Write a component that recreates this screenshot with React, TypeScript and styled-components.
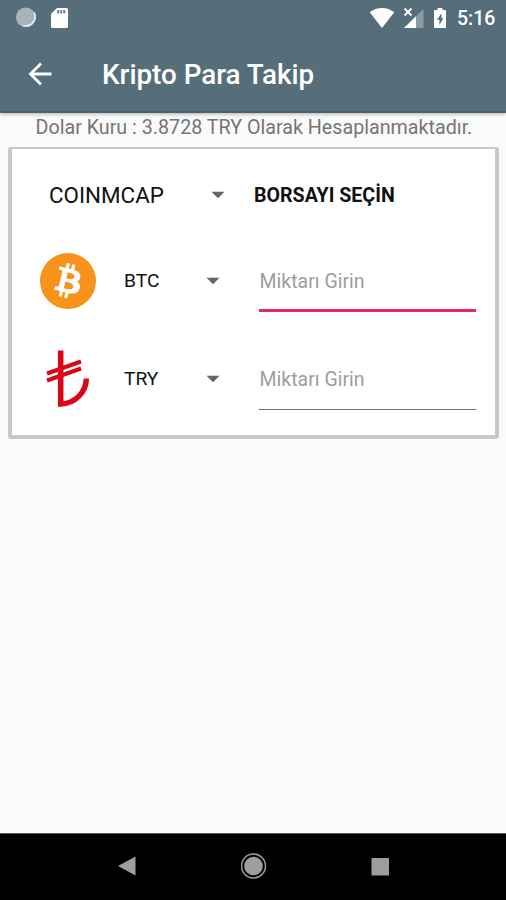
import React from 'react';
import styled, { createGlobalStyle } from 'styled-components';

const GlobalStyle = createGlobalStyle`
  * { box-sizing: border-box; }
  body { margin: 0; background: #fafafa; font-family: Roboto, sans-serif; }
`;

const Screen = styled.div`
  width: 506px;
  height: 900px;
  display: flex;
  flex-direction: column;
  background: #fafafa;
  overflow: hidden;
`;

const Header = styled.header`
  height: 113px;
  flex: none;
  background: #566e7a;
  border-bottom: 2px solid #456470;
  box-shadow: 0 1px 4px rgba(0, 0, 0, 0.3);
  color: #fff;
`;

const StatusBar = styled.div`
  height: 35px;
  display: flex;
  align-items: center;
  justify-content: space-between;
  padding: 0 11px 0 15px;
`;

const StatusGroup = styled.div<{ $gap: number }>`
  display: flex;
  align-items: center;
  gap: ${(p) => p.$gap}px;
`;

const Clock = styled.span`
  font-size: 19.5px;
  font-weight: 500;
  line-height: 22px;
  padding-top: 2px;
  width: 38px;
  margin-left: 2px;
  white-space: nowrap;
`;

const Toolbar = styled.div`
  height: 77px;
  display: flex;
  align-items: center;
  padding-left: 28px;
`;

const BackButton = styled.button`
  display: flex;
  padding: 0;
  border: 0;
  background: none;
  color: inherit;
`;

const Title = styled.h1`
  margin: 2px 0 0 50px;
  font-size: 27.8px;
  font-weight: 500;
  line-height: 36px;
  white-space: nowrap;
`;

const Main = styled.main`
  flex: 1;
  display: flex;
  flex-direction: column;
`;

const Rate = styled.p`
  height: 34px;
  margin: 0;
  padding-left: 35.5px;
  font-size: 19.7px;
  line-height: 30px;
  color: #757575;
  white-space: nowrap;
`;

const Card = styled.section`
  width: 491px;
  height: 292px;
  margin-left: 8px;
  background: #fff;
  border: solid #c8c8c8;
  border-width: 2px 4px 4px;
  border-radius: 3px;
  padding-top: 2px;
`;

const MarketRow = styled.div`
  height: 88px;
  display: grid;
  grid-template-columns: 205px 1fr;
  align-items: center;
  padding-left: 37px;
`;

const CurrencyRow = styled.div<{ $height: number }>`
  height: ${(p) => p.$height}px;
  display: grid;
  grid-template-columns: 56px 28px 135px 217px;
  align-items: center;
  padding-left: 28px;
`;

const Spinner = styled.div<{ $size: number; $arrow: number }>`
  display: grid;
  grid-template-columns: ${(p) => p.$arrow}px 14px;
  align-items: center;
  font-size: ${(p) => p.$size}px;
  line-height: 28px;
  color: #111;
`;

const Prompt = styled.strong`
  font-size: 19.6px;
  font-weight: 700;
  color: #111;
  white-space: nowrap;
`;

const Amount = styled.input<{ $focused?: boolean }>`
  width: 217px;
  height: 62px;
  padding: ${(p) => (p.$focused ? 3 : 2)}px 0 ${(p) => (p.$focused ? 0 : 1)}px 0.5px;
  border: 0;
  border-bottom: ${(p) => (p.$focused ? '3px solid #ec2566' : '1px solid #707070')};
  background: transparent;
  font: 400 19.5px Roboto, sans-serif;
  outline: 0;
  &::placeholder { color: #9d9d9d; opacity: 1; }
`;

const NavBar = styled.nav`
  height: 67px;
  flex: none;
  display: flex;
  align-items: center;
  justify-content: space-between;
  padding: 0 116px 2px 117px;
  background: #000;
  border-top: 1px solid #555;
`;

const Caret = () => (
  <svg width="14" height="8" viewBox="0 0 14 8"><path d="M0.5 .8h13L7 7.3z" fill="#666" /></svg>
);

const Bitcoin = () => (
  <svg width="56" height="57" viewBox="0 0 64 65">
    <circle cx="32" cy="32" r="32" fill="#f7931a" />
    <path
      fill="#fff"
      d="M46.1 27.4c.6-4.3-2.6-6.5-7-8l1.4-5.7-3.5-.9-1.4 5.5-2.8-.6 1.4-5.6-3.5-.9-1.4 5.7-2.2-.5-4.8-1.2-.9 3.7s2.6.6 2.5.6c1.4.4 1.7 1.3 1.6 2l-3.9 15.8c-.2.4-.6 1.1-1.6.8l-2.500-.6-1.700 4 7 1.800-1.500 5.800 3.500.9 1.400-5.700 2.800.7-1.400 5.700 3.500.9 1.500-5.800c6 1.100 10.500.7 12.400-4.700 1.500-4.400-.1-6.900-3.200-8.500 2.300-.5 4-2 4.300-5.200zM38 38.700c-1.100 4.400-8.400 2-10.800 1.400l1.900-7.700c2.400.6 10 1.800 8.900 6.300zm1.100-11.400c-1 4-7.100 2-9.100 1.500l1.800-7c2 .5 8.300 1.400 7.300 5.500z"
    />
  </svg>
);

const Lira = () => (
  <svg width="56" height="58" viewBox="0 0 56 58">
    <g fill="none" stroke="#d90718">
      <path d="M20.700.5v53.500c14-.2 25.600-11.600 25.600-25.500" strokeWidth="5.500" />
      <path d="M7 23.500L41 11.500M7 30.500L41 18.500" strokeWidth="4" />
    </g>
  </svg>
);

const StatusIcons = () => (
  <StatusGroup $gap={8}>
    <svg width="26" height="22" viewBox="0 0 26 22"><path d="M.7 5.200C8-.5 18-.5 25.300 5.200L13 21z" fill="#fff" /></svg>
    <svg width="22" height="22" viewBox="0 0 22 22">
      <path d="M20.500 2v19H1z" fill="#8b9ca4" />
      <path d="M13 9.300V21H1z" fill="#fff" />
      <path d="M1.500 1.500l7 7m0-7l-7 7" stroke="#fff" strokeWidth="2" />
    </svg>
    <svg width="14" height="22" viewBox="0 0 14 22">
      <path d="M4.500 1h5v2H12a1 1 0 011 1v16a1 1 0 01-1 1H2a1 1 0 01-1-1V4a1 1 0 011-1h2.500z" fill="#fff" />
      <path d="M8.500 6.200L4 12.700h2.400V18l4-6.700H8.500z" fill="#566e7a" />
    </svg>
    <Clock>5:16</Clock>
  </StatusGroup>
);

export default function App() {
  return (
    <>
      <GlobalStyle />
      <Screen>
        <Header>
          <StatusBar>
            <StatusGroup $gap={15}>
              <svg width="21" height="21" viewBox="0 0 21 21">
                <circle cx="10.700" cy="10.300" r="9.800" fill="#a7b4ba" />
                <path d="M19 5.500a9.300 9.300 0 01-11.500 13" fill="none" stroke="#e3e8ea" strokeWidth="1.800" />
              </svg>
              <svg width="18" height="22" viewBox="0 0 18 22">
                <path d="M6 1h9.500A1.500 1.500 0 0117 2.500v17a1.500 1.500 0 01-1.500 1.500h-14A1.500 1.500 0 010 19.500V7z" fill="#fff" />
                <path d="M7.200 3v3.500m3-3.500v3.500m3-3.500v3.500" stroke="#71838c" strokeWidth="2" />
              </svg>
            </StatusGroup>
            <StatusIcons />
          </StatusBar>
          <Toolbar>
            <BackButton aria-label="Geri">
              <svg width="24" height="24" viewBox="0 0 24 24" fill="none" stroke="currentColor" strokeWidth="2.800">
                <path d="M23.500 12H2.500M13 1.500L2.500 12 13 22.500" />
              </svg>
            </BackButton>
            <Title>Kripto Para Takip</Title>
          </Toolbar>
        </Header>
        <Main>
          <Rate>Dolar Kuru : 3.8728 TRY Olarak Hesaplanmaktadır.</Rate>
          <Card>
            <MarketRow>
              <Spinner $size={22.4} $arrow={162}>COINMCAP<Caret /></Spinner>
              <Prompt>BORSAYI SEÇİN</Prompt>
            </MarketRow>
            <CurrencyRow $height={84}>
              <Bitcoin />
              <span />
              <Spinner $size={19.2} $arrow={82}>BTC<Caret /></Spinner>
              <Amount $focused placeholder="Miktarı Girin" />
            </CurrencyRow>
            <CurrencyRow $height={112}>
              <Lira />
              <span />
              <Spinner $size={19.2} $arrow={82}>TRY<Caret /></Spinner>
              <Amount placeholder="Miktarı Girin" />
            </CurrencyRow>
          </Card>
        </Main>
        <NavBar>
          <svg width="19" height="20" viewBox="0 0 19 20"><path d="M1 10L18.500.5v19z" fill="#9e9e9e" /></svg>
          <svg width="26" height="26" viewBox="0 0 26 26">
            <circle cx="12.500" cy="13" r="12" fill="none" stroke="#9e9e9e" strokeWidth="1.500" />
            <circle cx="12.500" cy="13" r="9.300" fill="#9e9e9e" />
          </svg>
          <svg width="19" height="19" viewBox="0 0 19 19"><path d="M.5 1h17.500v17.500H.5z" fill="#9e9e9e" /></svg>
        </NavBar>
      </Screen>
    </>
  );
}
